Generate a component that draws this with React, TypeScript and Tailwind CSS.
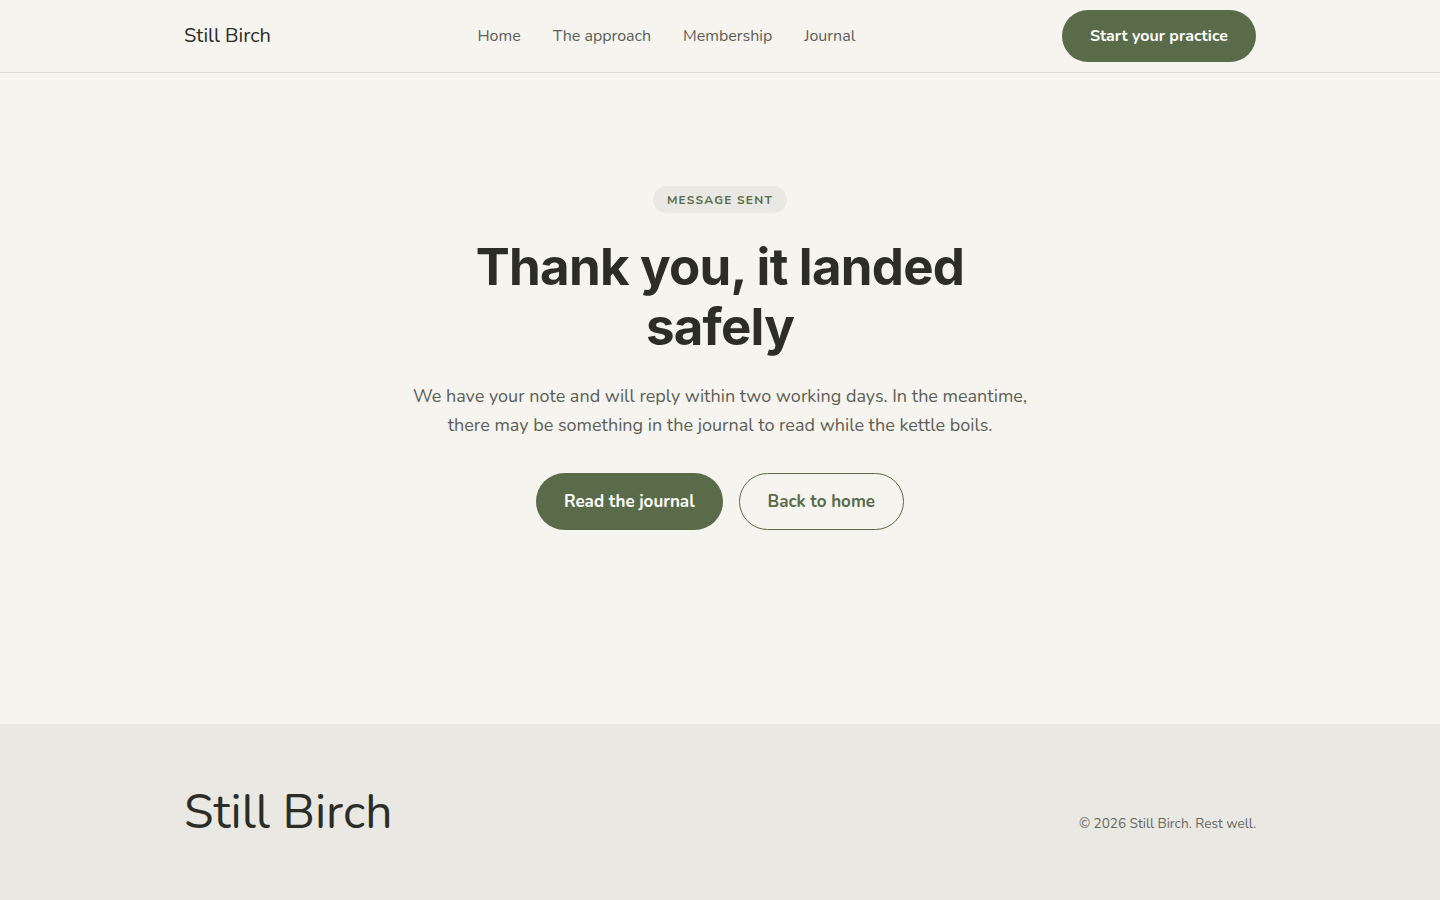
import React from 'react';

const body = { fontFamily: '"Nunito", "Lato", "Noto Sans", sans-serif' };
const display = { fontFamily: '"Inter", "Noto Sans", sans-serif' };

export default function App() {
  const links = ['Home', 'The approach', 'Membership', 'Journal'];

  return (
    <div className="min-h-screen bg-[#f5f4ef] text-[#2b2d26]" style={body}>
      <header className="border-b border-[#dcdbd5]">
        <div className="mx-auto max-w-6xl px-10 h-[72px] flex items-center justify-between">
          <a className="text-[20px] text-[#2b2d26]">Still Birch</a>
          <nav className="flex items-center gap-8 text-[16px] text-[#5c5d56]">
            {links.map(l => (
              <a key={l}>{l}</a>
            ))}
          </nav>
          <button className="h-[52px] px-7 rounded-full bg-[#5a6b4a] text-white text-[16px] font-bold">
            Start your practice
          </button>
        </div>
      </header>

      <main className="pt-[113px] pb-[194px] flex flex-col items-center text-center">
        <span className="h-[27px] px-[14px] rounded-full bg-[#e9e8e2] text-[#5a6b4a] text-[12px] font-bold tracking-[0.1em] uppercase flex items-center">
          Message sent
        </span>
        <h1
          className="mt-[24px] max-w-[580px] text-[51px] leading-[60px] font-bold tracking-[-0.015em] text-[#2b2d26]"
          style={display}
        >
          Thank you, it landed safely
        </h1>
        <p className="mt-[25px] max-w-[640px] text-[18px] leading-[29px] text-[#5c5d56]">
          We have your note and will reply within two working days. In the meantime, there may be something in the journal to read while the kettle boils.
        </p>
        <div className="mt-[33px] flex gap-4">
          <button className="h-[57px] px-7 rounded-full bg-[#5a6b4a] text-white text-[17px] font-bold">
            Read the journal
          </button>
          <button className="h-[57px] px-7 rounded-full border border-[#5a6b4a] text-[#5a6b4a] text-[17px] font-bold">
            Back to home
          </button>
        </div>
      </main>

      <footer className="bg-[#e9e8e3] h-[176px]">
        <div className="mx-auto max-w-6xl px-10 h-full flex items-center justify-between">
          <span className="text-[48px] leading-none text-[#2b2d26]">Still Birch</span>
          <span className="text-[13.6px] text-[#66675f] mt-[24px]">© 2026 Still Birch. Rest well.</span>
        </div>
      </footer>
    </div>
  );
}
